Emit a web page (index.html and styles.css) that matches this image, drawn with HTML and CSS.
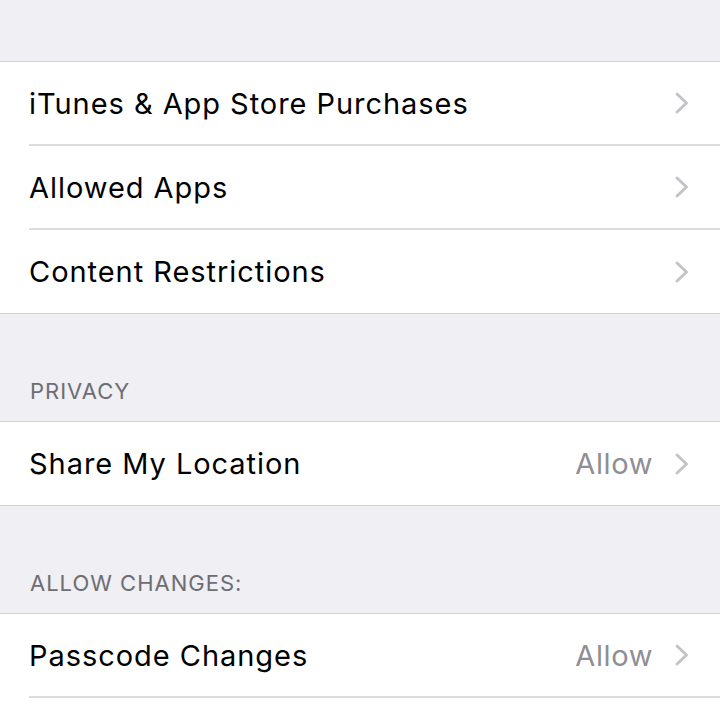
FILE: index.html
```html
<!DOCTYPE html>
<html>
<head>
<meta charset="utf-8">
<link rel="stylesheet" href="styles.css">
</head>
<body>
<div class="screen">
  <div class="spacer top"></div>
  <div class="group">
    <div class="row"><span class="label">iTunes &amp; App Store Purchases</span><span class="right"><svg class="chev" viewBox="0 0 16 24"><path d="M3 3 L12.5 12 L3 21"/></svg></span></div>
    <div class="row"><span class="label">Allowed Apps</span><span class="right"><svg class="chev" viewBox="0 0 16 24"><path d="M3 3 L12.5 12 L3 21"/></svg></span></div>
    <div class="row last"><span class="label">Content Restrictions</span><span class="right"><svg class="chev" viewBox="0 0 16 24"><path d="M3 3 L12.5 12 L3 21"/></svg></span></div>
  </div>
  <div class="header">PRIVACY</div>
  <div class="group">
    <div class="row last"><span class="label">Share My Location</span><span class="right"><span class="value">Allow</span><svg class="chev" viewBox="0 0 16 24"><path d="M3 3 L12.5 12 L3 21"/></svg></span></div>
  </div>
  <div class="header">ALLOW CHANGES:</div>
  <div class="group open">
    <div class="row"><span class="label">Passcode Changes</span><span class="right"><span class="value">Allow</span><svg class="chev" viewBox="0 0 16 24"><path d="M3 3 L12.5 12 L3 21"/></svg></span></div>
    <div class="row tail"></div>
  </div>
</div>
</body>
</html>
```

FILE: styles.css
```css
html, body {
  margin: 0;
  padding: 0;
  background: #efeff4;
}
body {
  font-family: Inter, "Noto Sans", sans-serif;
  width: 720px;
  height: 720px;
  overflow: hidden;
}
.screen {
  display: flex;
  flex-direction: column;
}
.spacer.top {
  height: 61px;
}
.group {
  background: #fff;
  border-top: 1.5px solid #d2d2d6;
  border-bottom: 1.5px solid #d2d2d6;
}
.group.open {
  border-bottom: none;
}
.row {
  height: 82px;
  margin-left: 29px;
  padding-right: 30px;
  display: flex;
  align-items: center;
  justify-content: space-between;
  border-bottom: 2px solid #dcdce0;
}
.row.last {
  height: 83px;
  border-bottom: none;
}
.row.tail {
  height: 30px;
  border-bottom: none;
}
.label {
  font-size: 29px;
  color: #000;
  letter-spacing: 0.95px;
}
.right {
  display: flex;
  align-items: center;
  gap: 21px;
}
.value {
  font-size: 29px;
  color: #8e8e93;
  letter-spacing: 0.6px;
}
.chev {
  width: 16px;
  height: 24px;
}
.chev path {
  fill: none;
  stroke: #c4c4c8;
  stroke-width: 3;
  stroke-linecap: round;
  stroke-linejoin: round;
}
.header {
  height: 107px;
  box-sizing: border-box;
  padding: 0 0 17px 30px;
  display: flex;
  align-items: flex-end;
  font-size: 22px;
  color: #6d6d72;
  letter-spacing: 1px;
}
```
